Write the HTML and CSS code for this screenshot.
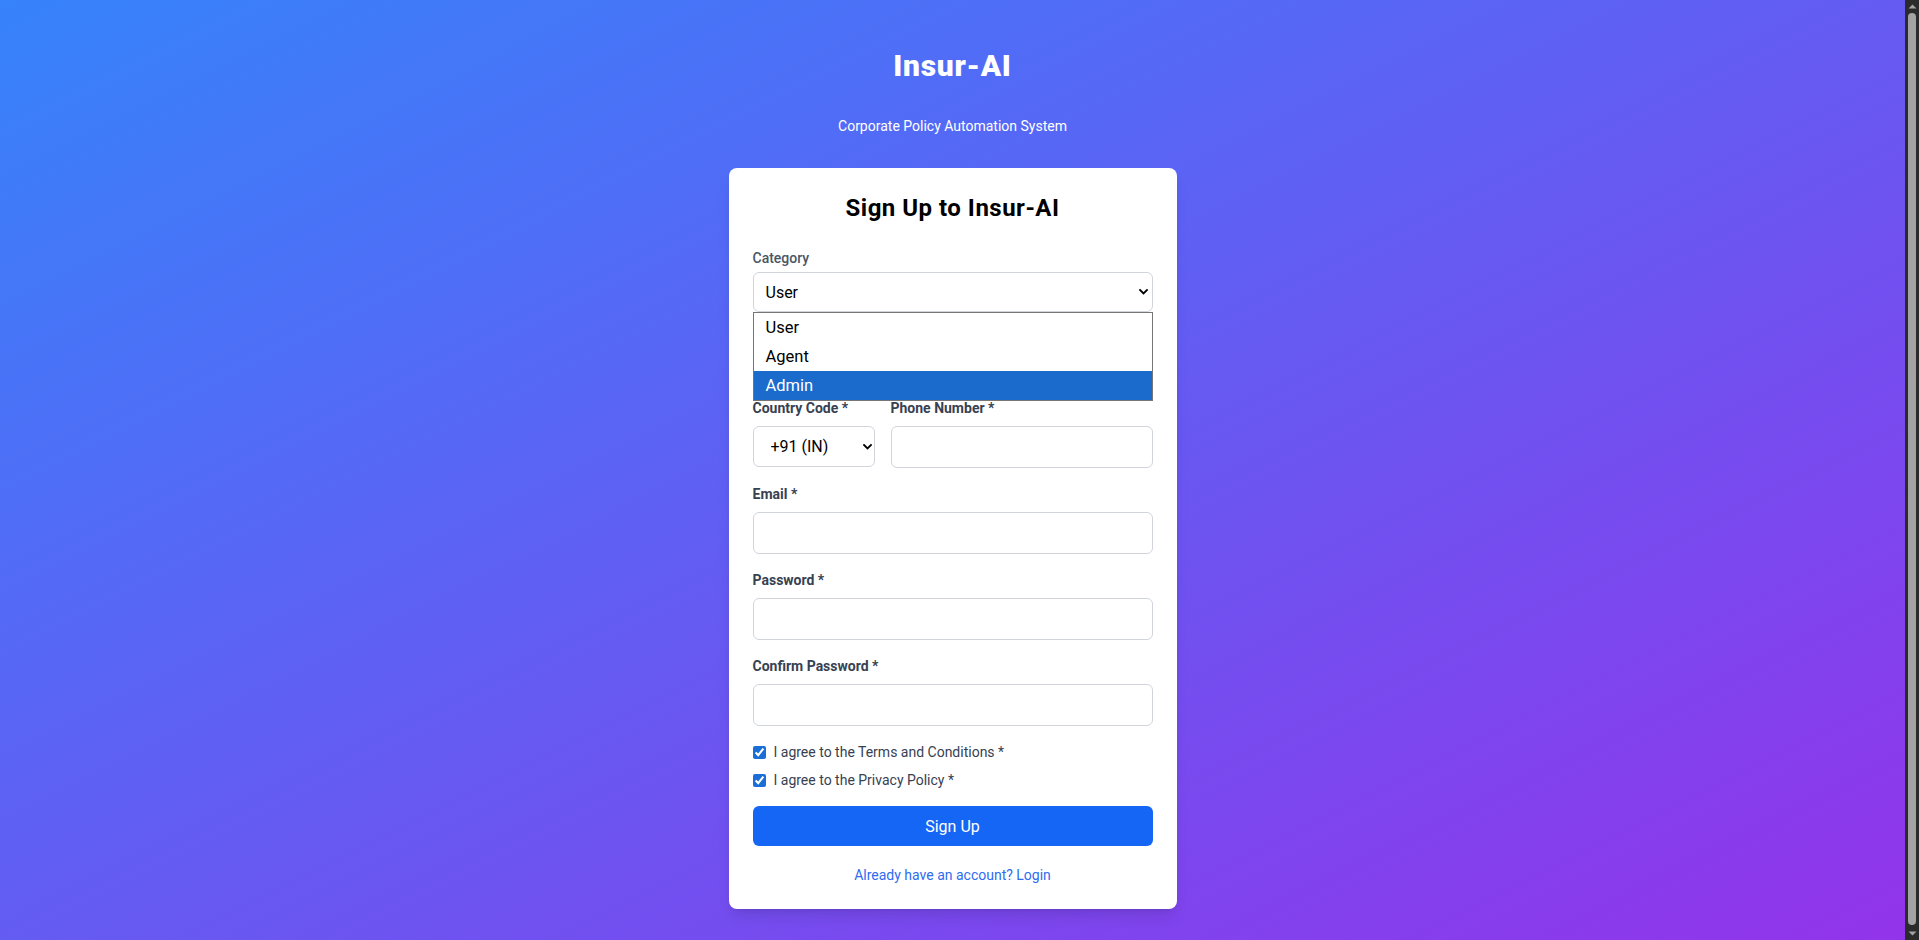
FILE: index.html
```html
<!DOCTYPE html>
<html lang="en">
<head>
<meta charset="utf-8">
<title>Insur-AI – Sign Up</title>
<link rel="stylesheet" href="styles.css">
</head>
<body>
<div class="page">
  <header class="brand">
    <h1 class="brand-title">Insur-AI</h1>
    <p class="brand-sub">Corporate Policy Automation System</p>
  </header>

  <main class="card">
    <h2 class="card-title">Sign Up to Insur-AI</h2>
    <form class="form">
      <div class="field field-category">
        <label class="label label-light" for="category">Category</label>
        <div class="select-wrap">
          <select id="category" class="control select select-cat">
            <option>User</option>
            <option>Agent</option>
            <option>Admin</option>
          </select>
          <svg class="chev" width="9" height="6" viewBox="0 0 9 6" aria-hidden="true"><path d="M1 1 L4.5 4.5 L8 1" fill="none" stroke="#000" stroke-width="1.8" stroke-linecap="square"/></svg>
          <ul class="dropdown">
            <li class="opt">User</li>
            <li class="opt">Agent</li>
            <li class="opt opt-active">Admin</li>
          </ul>
        </div>
      </div>

      <div class="row">
        <div class="field field-country">
          <label class="label" for="cc">Country Code *</label>
          <div class="select-wrap">
            <select id="cc" class="control select select-cc">
              <option>+91 (IN)</option>
            </select>
            <svg class="chev chev-cc" width="9" height="6" viewBox="0 0 9 6" aria-hidden="true"><path d="M1 1 L4.5 4.5 L8 1" fill="none" stroke="#000" stroke-width="1.8" stroke-linecap="square"/></svg>
          </div>
        </div>
        <div class="field field-phone">
          <label class="label" for="phone">Phone Number *</label>
          <input id="phone" class="control input" type="tel">
        </div>
      </div>

      <div class="field">
        <label class="label" for="email">Email *</label>
        <input id="email" class="control input" type="email">
      </div>

      <div class="field">
        <label class="label" for="pw">Password *</label>
        <input id="pw" class="control input" type="password">
      </div>

      <div class="field">
        <label class="label" for="pw2">Confirm Password *</label>
        <input id="pw2" class="control input" type="password">
      </div>

      <div class="checks">
        <label class="check"><input type="checkbox" checked> <span>I agree to the Terms and Conditions *</span></label>
        <label class="check"><input type="checkbox" checked> <span>I agree to the Privacy Policy *</span></label>
      </div>

      <button type="button" class="btn">Sign Up</button>
    </form>
    <p class="login"><a href="#" class="login-link">Already have an account? Login</a></p>
  </main>
</div>
<div class="scrollbar" aria-hidden="true">
  <div class="sb-arrow"><svg width="9" height="5" viewBox="0 0 9 5"><path d="M0.5 4.5 L4.5 0.5 L8.5 4.5 Z" fill="#a3a3a3"/></svg></div>
  <div class="sb-track"><div class="sb-thumb"></div></div>
  <div class="sb-arrow"><svg width="9" height="5" viewBox="0 0 9 5"><path d="M0.5 0.5 L4.5 4.5 L8.5 0.5 Z" fill="#a3a3a3"/></svg></div>
</div>
</body>
</html>
```

FILE: styles.css
```css
* { box-sizing: border-box; }

html { overflow: hidden; }
html, body { margin: 0; padding: 0; }

body {
  font-family: Roboto, "Liberation Sans", sans-serif;
  display: flex;
  align-items: flex-start;
  color: #111827;
  background: #2b2b2b;
}

.page {
  flex: 1;
  min-height: 100vh;
  padding: 48px 16px 48px;
  display: flex;
  flex-direction: column;
  align-items: center;
  background: linear-gradient(to bottom right, #3683fb, #9333ea);
}

.scrollbar {
  flex: none;
  width: 14px;
  height: 100vh;
  background: #2b2b2b;
  display: flex;
  flex-direction: column;
}
.sb-arrow {
  height: 13px;
  display: flex;
  align-items: center;
  justify-content: center;
}
.sb-track {
  flex: 1;
  padding: 0 3px 2px 3px;
  display: flex;
  flex-direction: column;
}
.sb-thumb {
  flex: 1;
  background: #a3a3a3;
  border-radius: 5px;
}

.brand { text-align: center; color: #fff; }
.brand-title {
  margin: 0 0 32px;
  font-size: 30px;
  line-height: 36px;
  font-weight: 900;
  letter-spacing: 0.7px;
}
.brand-sub {
  margin: 0 0 32px;
  font-size: 14px;
  line-height: 20px;
}

.card {
  width: 448px;
  background: #fff;
  border-radius: 8px;
  padding: 24px;
  box-shadow: 0 10px 15px -3px rgba(0,0,0,.1), 0 4px 6px -4px rgba(0,0,0,.1);
}

.card-title {
  margin: 0 0 24px;
  text-align: center;
  font-size: 24px;
  line-height: 32px;
  font-weight: 700;
  letter-spacing: 0.5px;
  color: #000;
}

.form { display: flex; flex-direction: column; }

.field { display: flex; flex-direction: column; margin-bottom: 16px; }
.field-category { margin-bottom: 86px; }

.label {
  font-size: 14px;
  line-height: 20px;
  font-weight: 700;
  color: #374151;
  margin-bottom: 8px;
}
.label-light { font-weight: 500; color: #4b5563; margin-bottom: 4px; }

.control {
  width: 100%;
  border: 1px solid #d1d5db;
  border-radius: 6px;
  background: #fff;
  font-family: inherit;
  font-size: 16px;
  color: #000;
  outline: none;
}

.input { height: 42px; padding: 0 12px; }

.select-wrap { position: relative; }
.select {
  appearance: none;
  -webkit-appearance: none;
  display: block;
}
.select-cat { height: 40px; padding: 0 12px; }
.select-cc { height: 41px; padding: 0 16px 0 17px; }

.chev { position: absolute; right: 5px; top: 17px; }
.chev-cc { right: 3px; top: 18px; }

.dropdown {
  position: absolute;
  left: 0;
  right: 0;
  top: 100%;
  margin: 0;
  padding: 0;
  list-style: none;
  background: #fff;
  border: 1px solid #767676;
  z-index: 5;
}
.opt {
  height: 29px;
  line-height: 29px;
  padding-left: 12px;
  font-size: 16.5px;
  color: #000;
}
.opt-active { background: #1b6bcd; color: #fff; }

.row { display: flex; gap: 16px; }
.field-country { width: 122px; flex: none; }
.field-phone { flex: 1; }

.checks { display: flex; flex-direction: column; gap: 8px; margin-bottom: 16px; }
.check {
  display: flex;
  align-items: center;
  gap: 8px;
  font-size: 14px;
  line-height: 20px;
  color: #374151;
}
.check input { width: 13px; height: 13px; margin: 0; accent-color: #1a6ed8; }

.btn {
  height: 40px;
  width: 100%;
  border: none;
  border-radius: 6px;
  background: #1666f5;
  color: #fff;
  font-family: inherit;
  font-size: 16px;
}

.login {
  margin: 19px 0 0;
  text-align: center;
  font-size: 14px;
  line-height: 20px;
}
.login-link { color: #2f6cf0; text-decoration: none; }
```
